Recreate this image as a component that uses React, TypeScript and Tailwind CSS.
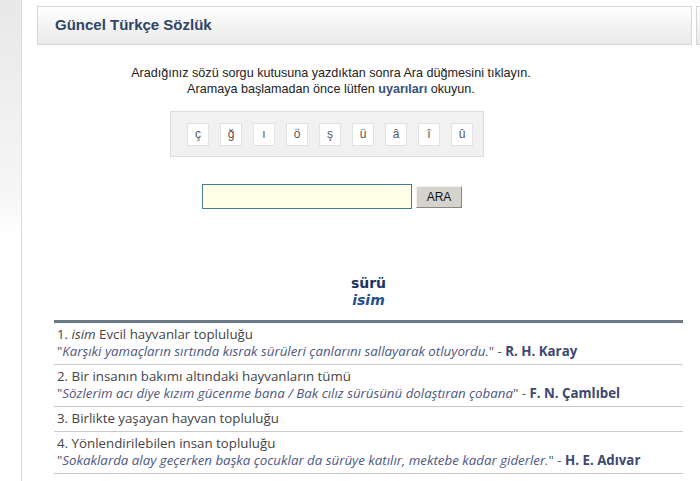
const LETTERS = ["ç", "ğ", "ı", "ö", "ş", "ü", "â", "î", "û"];

const ENTRIES = [
  {
    no: "1.",
    tag: "isim",
    text: "Evcil hayvanlar topluluğu",
    quote: "Karşıki yamaçların sırtında kısrak sürüleri çanlarını sallayarak otluyordu.",
    author: "R. H. Karay",
  },
  {
    no: "2.",
    text: "Bir insanın bakımı altındaki hayvanların tümü",
    quote: "Sözlerim acı diye kızım gücenme bana / Bak cılız sürüsünü dolaştıran çobana",
    author: "F. N. Çamlıbel",
  },
  {
    no: "3.",
    text: "Birlikte yaşayan hayvan topluluğu",
  },
  {
    no: "4.",
    text: "Yönlendirilebilen insan topluluğu",
    quote: "Sokaklarda alay geçerken başka çocuklar da sürüye katılır, mektebe kadar giderler.",
    author: "H. E. Adıvar",
  },
];

export default function App() {
  return (
    <div className="flex w-[700px] h-[481px] overflow-hidden bg-white font-['Liberation_Sans',Arial,sans-serif]">
      {/* left rail */}
      <div className="w-[22px] shrink-0 border-r border-[#dcdcdc] bg-gradient-to-b from-[#e8e8e8] via-[#f6f6f6] via-40% to-white to-50%" />

      <div className="ml-[15px] w-[655px] shrink-0 flex flex-col">
        {/* header */}
        <div className="mt-[6px] h-[39px] border border-[#d6d6d6] bg-gradient-to-b from-white to-[#e9e9e9] flex items-center pl-[17px]">
          <h1 className="text-[15px] font-bold text-[#2e4564]">Güncel Türkçe Sözlük</h1>
        </div>

        {/* search form */}
        <div className="w-[588px] flex flex-col items-center text-center">
          <p className="mt-[20px] text-[12.6px] leading-[16px] text-[#222]">
            Aradığınız sözü sorgu kutusuna yazdıktan sonra Ara düğmesini tıklayın.
            <br />
            Aramaya başlamadan önce lütfen <b className="text-[#35517a]">uyarıları</b> okuyun.
          </p>

          <div className="mt-[14px] mr-[8px] w-[314px] h-[46px] bg-[#f1f1f1] border border-[#dadada] flex items-center gap-[11px] pl-[16px]">
            {LETTERS.map((l) => (
              <span
                key={l}
                className="w-[22px] h-[23px] bg-white border border-[#e2e2e2] flex items-center justify-center text-[12px] text-[#555]"
              >
                {l}
              </span>
            ))}
          </div>

          <div className="mt-[27px] flex items-center gap-[4px] pl-[2px]">
            <div className="w-[210px] h-[25px] border border-[#3f7f8f] bg-[#ffffe8]" />
            <button className="w-[46px] h-[22px] bg-[#d6d3cc] border border-t-[#f2f1ee] border-l-[#f2f1ee] border-r-[#8a8882] border-b-[#8a8882] text-[12px] text-[#111] leading-none">
              ARA
            </button>
          </div>
        </div>

        {/* result heading */}
        <div className="mt-[66px] flex flex-col items-center font-['DejaVu_Sans',Verdana,sans-serif] text-[14px] leading-[17px] font-bold pl-[8px]">
          <span className="text-[#1b3466]">sürü</span>
          <span className="italic text-[#25508e]">isim</span>
        </div>

        {/* definitions */}
        <div className="mt-[11px] ml-[17px] w-[629px] border-t-[3px] border-[#6c7984] font-['Open_Sans',sans-serif] text-[13.3px] leading-[17px]">
          {ENTRIES.map((e) => (
            <div key={e.no} className="border-b border-[#c9c9c9] pl-[3px] pt-[3px] pb-[4px]">
              <div className="text-[#444]">
                {e.no} {e.tag && <i>{e.tag}</i>} {e.text}
              </div>
              {e.quote && (
                <div className="text-[#555]">
                  "<i className="text-[#4d5782]">{e.quote}</i>" -{" "}
                  <b className="text-[#3c4870]">{e.author}</b>
                </div>
              )}
            </div>
          ))}
        </div>
      </div>

      {/* neighbouring box */}
      <div className="ml-[4px] mt-[6px] h-[39px] flex-1 border-l border-t border-b border-[#d6d6d6] bg-gradient-to-b from-white to-[#e9e9e9]" />
    </div>
  );
}
